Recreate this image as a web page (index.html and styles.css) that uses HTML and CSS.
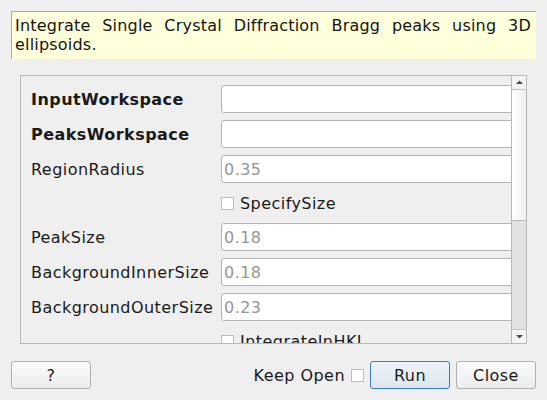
FILE: index.html
```html
<!DOCTYPE html>
<html>
<head>
<meta charset="utf-8">
<link rel="stylesheet" href="styles.css">
</head>
<body>
<div class="dialog">
  <div class="desc">Integrate Single Crystal Diffraction Bragg peaks using 3D ellipsoids.</div>
  <div class="scrollarea">
    <div class="viewport">
      <div class="form">
        <div class="row"><div class="label bold">InputWorkspace</div><div class="input"></div></div>
        <div class="row"><div class="label bold">PeaksWorkspace</div><div class="input"></div></div>
        <div class="row"><div class="label">RegionRadius</div><div class="input"><span class="ph">0.35</span></div></div>
        <div class="row check"><div class="label"></div><div class="cb"><span class="box"></span>SpecifySize</div></div>
        <div class="row"><div class="label">PeakSize</div><div class="input"><span class="ph">0.18</span></div></div>
        <div class="row"><div class="label">BackgroundInnerSize</div><div class="input"><span class="ph">0.18</span></div></div>
        <div class="row"><div class="label">BackgroundOuterSize</div><div class="input"><span class="ph">0.23</span></div></div>
        <div class="row check"><div class="label"></div><div class="cb"><span class="box"></span>IntegrateInHKL</div></div>
      </div>
    </div>
    <div class="scrollbar">
      <div class="arrow up"><svg width="13" height="13" viewBox="0 0 13 13"><polygon points="3,8 10,8 6.5,4.5" fill="#4a4a4a"/></svg></div>
      <div class="handle"></div>
      <div class="track"></div>
      <div class="arrow down"><svg width="13" height="13" viewBox="0 0 13 13"><polygon points="3,5 10,5 6.5,8.5" fill="#4a4a4a"/></svg></div>
    </div>
  </div>
  <div class="buttons">
    <div class="btn">?</div>
    <div class="spacer"></div>
    <div class="keep"><span class="keeptext">Keep Open</span><span class="box"></span></div>
    <div class="btn run">Run</div>
    <div class="btn">Close</div>
  </div>
</div>
</body>
</html>
```

FILE: styles.css
```css
html, body {
  margin: 0;
  padding: 0;
  background: #efefef;
  font-family: "DejaVu Sans", sans-serif;
  font-size: 16px;
  color: #1a1a1a;
}
.dialog {
  width: 547px;
  height: 400px;
  box-sizing: border-box;
  padding: 11px 11px 0 11px;
  display: flex;
  flex-direction: column;
  letter-spacing: 0.45px;
}
.desc {
  height: 48px;
  box-sizing: border-box;
  background: #ffffdc;
  border-top: 1px solid #a8a8a8;
  border-left: 1px solid #a8a8a8;
  padding: 4px 5px 0 3px;
  line-height: 19px;
  text-align: justify;
  color: #141414;
  letter-spacing: 0.2px;
}
.scrollarea {
  margin: 16px 9px 0 9px;
  height: 269px;
  box-sizing: border-box;
  border: 1px solid #b8b8b8;
  display: flex;
}
.viewport {
  flex: 1;
  overflow: hidden;
}
.form {
  padding: 9px 0 0 10px;
  display: flex;
  flex-direction: column;
  gap: 7px;
}
.row {
  display: flex;
  align-items: center;
  height: 28px;
}
.row.check { height: 26px; }
.label {
  width: 190px;
  flex: none;
  white-space: nowrap;
}
.bold { font-weight: bold; }
.input {
  width: 300px;
  flex: none;
  height: 28px;
  box-sizing: border-box;
  background: #fff;
  border: 1px solid #b4b4b4;
  border-radius: 3px;
  padding-left: 2px;
  display: flex;
  align-items: center;
}
.ph { color: #969696; }
.cb {
  display: flex;
  align-items: center;
  white-space: nowrap;
}
.box {
  display: inline-block;
  width: 13px;
  height: 13px;
  box-sizing: border-box;
  border: 1px solid #bdbdbd;
  background: #fff;
  margin-right: 6px;
}
.scrollbar {
  width: 14px;
  flex: none;
  border-left: 1px solid #b8b8b8;
  display: flex;
  flex-direction: column;
}
.arrow {
  height: 13px;
  flex: none;
  background: #f4f4f4;
  display: flex;
  justify-content: center;
  align-items: center;
}
.arrow.up { border-bottom: 1px solid #c4c4c4; }
.arrow.down { border-top: 1px solid #c4c4c4; }
.handle {
  height: 130px;
  flex: none;
  background: linear-gradient(to right, #ffffff, #f0f0f0);
  border-bottom: 1px solid #b8b8b8;
}
.track {
  flex: 1;
  background: #e2e2e2;
}
.buttons {
  margin-top: 17px;
  display: flex;
  align-items: center;
  height: 28px;
}
.spacer { flex: 1; }
.btn {
  width: 80px;
  height: 28px;
  box-sizing: border-box;
  border: 1px solid #b0b0b0;
  border-radius: 3px;
  background: linear-gradient(#fbfbfb, #ececec);
  display: flex;
  align-items: center;
  justify-content: center;
}
.btn.run {
  border-color: #3a7cc0;
  background: linear-gradient(#eef3f8, #dde6ef);
  margin-right: 6px;
}
.keep {
  display: flex;
  align-items: center;
  margin-right: 6px;
  white-space: nowrap;
}
.keep .box { margin-left: 6px; margin-right: 0; }
```
